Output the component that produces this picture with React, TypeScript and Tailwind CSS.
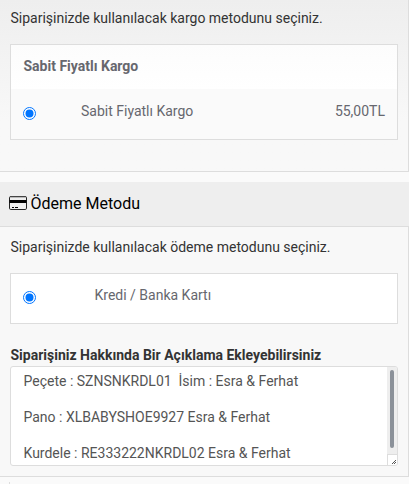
import React from 'react';
import clsx from 'clsx';

const noteLines = [
    'Peçete : SZNSNKRDL01  İsim : Esra & Ferhat',
    '',
    'Pano : XLBABYSHOE9927 Esra & Ferhat',
    '',
    'Kurdele : RE333222NKRDL02 Esra & Ferhat',
];

const RadioDot = () => (
    <svg className="w-[13px] h-[13px] flex-shrink-0" viewBox="0 0 13 13">
        <circle cx="6.5" cy="6.5" r="6" fill="#fff" stroke="#0075ff" strokeWidth="1" />
        <circle cx="6.5" cy="6.5" r="4" fill="#0075ff" />
    </svg>
);

const CardIcon = () => (
    <svg className="w-[18px] h-[14px] mb-0.5 flex-shrink-0" viewBox="0 0 18 14">
        <rect x="0.5" y="0.5" width="17" height="13" rx="1.3" fill="none" stroke="#222" strokeWidth="1" />
        <path d="M1.5 0.5h15" stroke="#444" strokeWidth="1.6" />
        <rect x="0.5" y="4" width="17" height="3" fill="#000" />
        <path d="M3 11.5h2M6 11.5h3" stroke="#000" strokeWidth="1" />
    </svg>
);

type OptionProps = {
    label: string;
    price?: string;
    labelClass: string;
    className?: string;
};

const Option = ({ label, price, labelClass, className }: OptionProps) => (
    <div className={clsx("flex items-start pl-3 pr-3 text-[#66676e]", className)}>
        <div className="pt-1.5">
            <RadioDot />
        </div>
        <span className={labelClass}>{label}</span>
        {price && <span className="ml-auto">{price}</span>}
    </div>
);

export default function App() {
    return (
        <div className="w-[409px] h-[484px] overflow-hidden bg-[#fafafa] font-['Roboto',sans-serif] text-sm leading-5 text-[#333]">
            {/* Shipping */}
            <section className="h-[172px] pl-2.5 pr-2.5 pt-2 border-r border-b border-[#ddd] bg-linear-to-b from-[#eee] to-[#f8f8f8] to-70%">
                <p className="pl-[0.5px]">Siparişinizde kullanılacak kargo metodunu seçiniz.</p>
                <div className="mt-4 h-24 border border-[#ddd] bg-white">
                    <div className="h-11 pl-[12.5px] pt-[11px] font-bold text-[#66676e] bg-linear-to-b from-[#fcfcfc] to-white">
                        Sabit Fiyatlı Kargo
                    </div>
                    <Option label="Sabit Fiyatlı Kargo" price="55,00TL" labelClass="ml-[45px]" className="h-[50px] pt-3 bg-[#fafafa]" />
                </div>
            </section>

            {/* Payment */}
            <section className="mt-2.5">
                <h2 className="flex items-center h-[45px] pl-[9px] gap-[3.5px] pb-px border-b border-[#ddd] bg-[#eee] text-base text-black">
                    <CardIcon />
                    Ödeme Metodu
                </h2>
                <div className="h-[250px] px-2.5 pt-2.5 border-r border-b border-[#ddd] bg-[#f8f8f8]">
                    <p className="pl-[0.5px]">Siparişinizde kullanılacak ödeme metodunu seçiniz.</p>
                    <div className="mt-4 h-[51px] border border-[#ddd] bg-white">
                        <Option label="Kredi / Banka Kartı" labelClass="ml-[58.5px]" className="pt-[11px]" />
                    </div>
                    <p className="mt-[21px] pl-[0.5px] font-bold">Siparişiniz Hakkında Bir Açıklama Ekleyebilirsiniz</p>
                    <div className="mt-px flex h-[100px] border border-[#ddd] rounded-[3px] bg-white overflow-hidden">
                        <div className="flex-1 pl-[12.5px] pt-[5px] text-[#555] leading-[18px]">
                            {noteLines.map((line, i) => (
                                <div key={i} className="h-[18px] whitespace-pre">{line}</div>
                            ))}
                        </div>
                        <div className="w-2.5 flex flex-col bg-[#eee]">
                            <div className="mt-[3px] ml-[3px] w-1 h-[78px] rounded-full bg-[#8b9199]" />
                            <div className="mt-auto h-[11px] border-t border-l border-[#ddd] bg-white">
                                <svg className="w-[9px] h-[10px]" viewBox="0 0 9 10">
                                    <path d="M4 8.5h1M5 7.5h1M6 6.5h1M7 5.5h1M6 8.5h1M7 7.5h1" stroke="#555" strokeWidth="1" />
                                </svg>
                            </div>
                        </div>
                    </div>
                </div>
            </section>

            <div className="mt-[5px] ml-[9px] h-0.5 border-l border-[#ddd]" />
        </div>
    );
}
